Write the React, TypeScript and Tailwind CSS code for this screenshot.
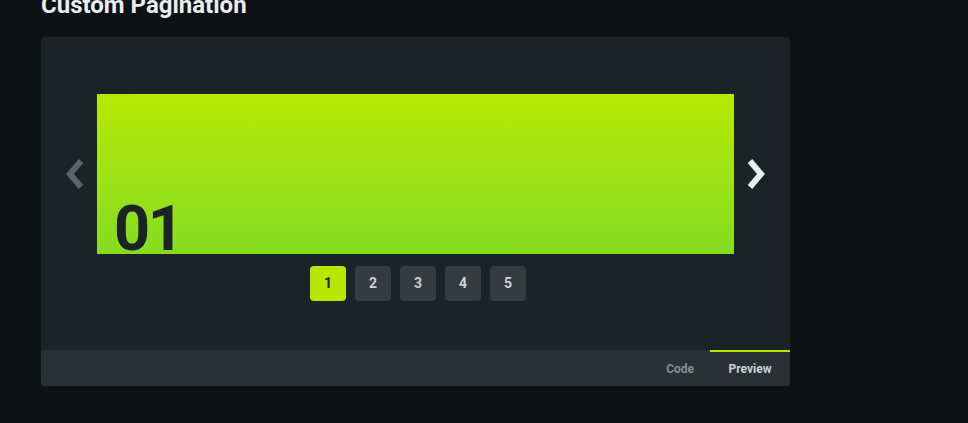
import {useState} from "react";

const pages = [1, 2, 3, 4, 5];

function Arrow({dir, className}: {dir: "left" | "right"; className: string}) {
    return (
        <svg width="24" height="34" viewBox="0 0 24 34" className={className}>
            {dir === "left"
                ? <path d="M18 4 L7 17 L18 30" fill="none" stroke="currentColor" strokeWidth="6"/>
                : <path d="M6 4 L17 17 L6 30" fill="none" stroke="currentColor" strokeWidth="6"/>}
        </svg>
    );
}

export default function App() {
    const [page, setPage] = useState(1);

    return (
        <div className="w-[968px] h-[423px] overflow-hidden bg-[#0e1215] font-['Roboto',sans-serif]">
            <div className="pl-[41px]">
                <h2 className="-mt-[9px] h-[46px] text-[24px] leading-[28px] font-bold text-[#e8edef]">
                    Custom Pagination
                </h2>
                <div className="w-[749px] h-[349px] bg-[#1c2326] rounded flex flex-col overflow-hidden">
                    <div className="flex-1 flex flex-col items-center pt-[57px]">
                        <div className="flex items-center">
                            <button className="w-[56px] flex justify-center pl-[12px]">
                                <Arrow dir="left" className="text-[#5a6366]"/>
                            </button>
                            <div
                                className="w-[637px] h-[160px] bg-gradient-to-b from-[#b6e900] to-[#84dc1f] overflow-hidden relative">
                                <span
                                    className="absolute left-[17px] top-[103px] text-[63px] leading-none font-bold text-[#1c2326] tracking-[-0.04em]">
                                    0{page}
                                </span>
                            </div>
                            <button className="w-[56px] flex justify-center pr-[12px]">
                                <Arrow dir="right" className="text-[#e8edef]"/>
                            </button>
                        </div>
                        <div className="flex gap-[9px] mt-[12px] ml-[5px]">
                            {pages.map((p) => (
                                <button key={p} onClick={() => setPage(p)}
                                        className={`w-[36px] h-[35px] rounded text-[14px] font-bold flex items-center justify-center
                                        ${p === page ? 'bg-[#b8e600] text-[#1c2326]' : 'bg-[#343c3f] text-[#c9d2d5]'}`}>
                                    {p}
                                </button>
                            ))}
                        </div>
                    </div>
                    <div className="h-[36px] bg-[#2a3134] flex justify-end text-[12px] font-bold">
                        <div className="px-[16px] flex items-center text-[#868f92] pt-[2px]">Code</div>
                        <div
                            className="w-[80px] flex items-center justify-center text-[#c9d2d5] border-t-2 border-[#b8e600]">
                            Preview
                        </div>
                    </div>
                </div>
            </div>
        </div>
    );
}
